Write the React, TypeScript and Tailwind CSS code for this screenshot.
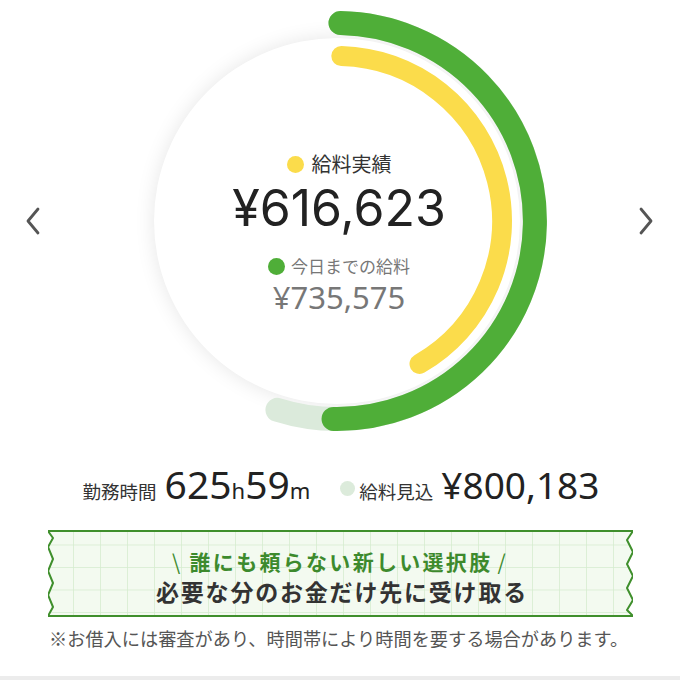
const jp = "font-['Noto_Sans_CJK_JP',sans-serif]";
const num = "font-['Noto_Sans','Noto_Sans_CJK_JP',sans-serif]";
const big = "font-['Inter','Noto_Sans',sans-serif]";

// ring geometry, in the 420x420 chart box
const C = 210;
const pt = (deg: number, r: number) => {
	const a = (deg * Math.PI) / 180;
	return `${(C + r * Math.sin(a)).toFixed(2)} ${(C - r * Math.cos(a)).toFixed(2)}`;
};
const arc = (from: number, to: number, r: number) =>
	`M ${pt(from, r)} A ${r} ${r} 0 ${to - from > 180 ? 1 : 0} 1 ${pt(to, r)}`;

const Chevron = ({ dir }: { dir: "left" | "right" }) => (
	<svg width="16" height="28" viewBox="0 0 16 28" className="shrink-0">
		<polyline
			points={dir === "left" ? "13,2 3,14 13,26" : "3,2 13,14 3,26"}
			fill="none"
			stroke="#555"
			strokeWidth="2.8"
			strokeLinecap="round"
			strokeLinejoin="round"
		/>
	</svg>
);

const SalaryRing = () => {
	return (
		<div className="relative w-[420px] h-[420px] shrink-0">
			{/* white disc */}
			<div className="absolute left-[27px] top-[27px] w-[366px] h-[366px] rounded-full bg-white shadow-[0_0_20px_rgba(0,0,0,0.1)]" />
			<svg className="absolute inset-0 overflow-visible" width="420" height="420" viewBox="0 0 420 420">
				<path d={arc(1, 197.5, 198)} fill="none" stroke="#dbeadb" strokeWidth="24" strokeLinecap="round" />
				<path d={arc(1, 181, 198)} fill="none" stroke="#4fae38" strokeWidth="24" strokeLinecap="round" />
				<path d={arc(1.5, 150, 165)} fill="none" stroke="#fbdc4b" strokeWidth="20" strokeLinecap="round" />
			</svg>
			{/* amounts */}
			<div className="absolute inset-0 flex flex-col items-center pt-[143px] pl-[4px]">
				<div className="flex items-center gap-[8px] h-[20px]">
					<span className="w-[17px] h-[17px] rounded-full bg-[#fbdc4b]" />
					<span className={`${jp} text-[20px] leading-[20px] text-[#333]`}>給料実績</span>
				</div>
				<p className={`${big} text-[50px] leading-[60px] text-[#222] mt-[4px]`}>¥616,623</p>
				<div className="flex items-center gap-[6px] h-[20px] mt-[18px]">
					<span className="w-[17px] h-[17px] rounded-full bg-[#4fae38]" />
					<span className={`${jp} text-[17px] leading-[20px] text-[#777]`}>今日までの給料</span>
				</div>
				<p className={`${num} text-[31px] leading-[42px] text-[#777]`}>¥735,575</p>
			</div>
		</div>
	);
};

const App = () => {
	return (
		<div className="w-[680px] h-[680px] bg-white overflow-hidden flex flex-col">
			{/* ring with pager arrows */}
			<div className="flex items-center pt-[11px]">
				<div className="ml-[25px]">
					<Chevron dir="left" />
				</div>
				<div className="ml-[86px]">
					<SalaryRing />
				</div>
				<div className="ml-[91px]">
					<Chevron dir="right" />
				</div>
			</div>

			{/* hours / projected pay */}
			<div className="flex items-baseline justify-center mt-[33px] h-[40px] leading-none pl-[2px]">
				<span className={`${jp} text-[18.5px] text-[#333]`}>勤務時間</span>
				<span className={`${num} text-[39px] text-[#222] ml-[8px]`}>625</span>
				<span className={`${num} text-[22px] text-[#222]`}>h</span>
				<span className={`${num} text-[39px] text-[#222]`}>59</span>
				<span className={`${num} text-[22px] text-[#222]`}>m</span>
				<span className="w-[15px] h-[15px] rounded-full bg-[#dcebdb] ml-[30px] self-center mt-[8px]" />
				<span className={`${jp} text-[18.5px] text-[#333] ml-[4px]`}>給料見込</span>
				<span className={`${num} text-[37px] text-[#222] ml-[8px]`}>¥800,183</span>
			</div>

			{/* campaign banner */}
			<div className="relative mt-[26px] mx-[48px] h-[87px]">
				<svg className="absolute inset-0" width="585" height="87" viewBox="0 0 585 87">
					<defs>
						<pattern id="grid" width="27" height="22.5" patternUnits="userSpaceOnUse" x="-2" y="-8">
							<path d="M 27 0 L 0 0 0 22.5" fill="none" stroke="#d5ecce" strokeWidth="1.5" />
						</pattern>
					</defs>
					<path
						d="M 0 1 L 585 1 L 579 10 L 585 22 L 579 34 L 585 46 L 579 58 L 585 70 L 579 80 L 585 86 L 0 86 L 5 77 L 0 65 L 5 53 L 0 41 L 5 29 L 0 17 L 5 8 Z"
						fill="#f3faf0"
					/>
					<path
						d="M 0 1 L 585 1 L 579 10 L 585 22 L 579 34 L 585 46 L 579 58 L 585 70 L 579 80 L 585 86 L 0 86 L 5 77 L 0 65 L 5 53 L 0 41 L 5 29 L 0 17 L 5 8 Z"
						fill="url(#grid)"
						stroke="#3f8f2c"
						strokeWidth="2"
						strokeLinejoin="round"
					/>
				</svg>
				<div className="relative flex flex-col items-center pt-[16px]">
					<p className={`${jp} text-[21px] leading-[30px] font-bold text-[#3d8a2d] tracking-[2.3px]`}>
						<span className="font-normal mr-[7px]">\</span>
						誰にも頼らない新しい選択肢
						<span className="font-normal ml-[5px]">/</span>
					</p>
					<p className={`${jp} text-[23px] leading-[30px] font-bold text-[#333] tracking-[1.8px] pl-[4px]`}>
						必要な分のお金だけ先に受け取る
					</p>
				</div>
			</div>

			{/* note */}
			<p className={`${jp} text-[18.2px] leading-[24px] text-[#555] mt-[9px] ml-[49px]`}>
				※お借入には審査があり、時間帯により時間を要する場合があります。
			</p>

			<div className="mt-auto h-[4px] bg-[#ececec]" />
		</div>
	);
};

export default App;
